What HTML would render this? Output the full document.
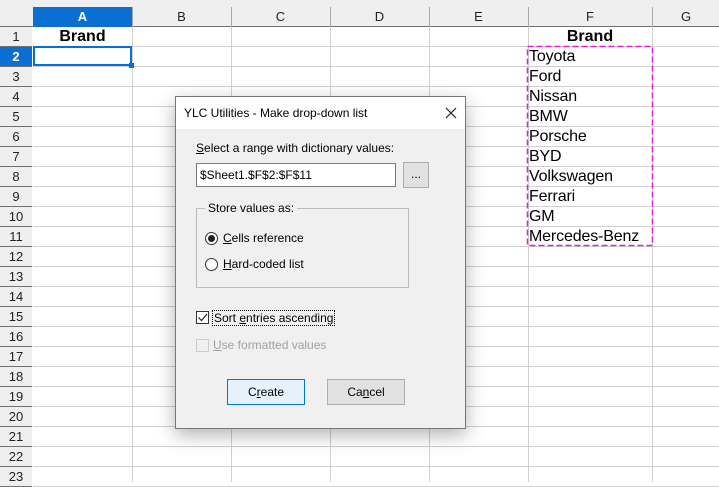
<!DOCTYPE html>
<html><head><meta charset="utf-8"><style>
*{margin:0;padding:0;box-sizing:border-box}
body{width:719px;height:482px;overflow:hidden;background:#fff;font-family:"Liberation Sans",sans-serif;position:relative}
.a{position:absolute}
.vl{position:absolute;top:0;width:1px;height:482px;background:#d0d0d0}
.hl{position:absolute;left:0;width:719px;height:1px;background:#d0d0d0}
.rh{position:absolute;left:0;width:32px;height:20px;background:#efefef;border-bottom:1px solid #707070;font-size:13px;text-align:center;line-height:20px;color:#222}
.ch{position:absolute;top:7px;height:20px;font-size:13px;text-align:center;line-height:20px;color:#222}
.cell{position:absolute;font-size:16px;line-height:20px;color:#000}
.d{font-family:"Liberation Sans",sans-serif;font-size:12px;color:#000}
u{text-decoration:underline}
</style></head><body>
<div class="a" style="left:0;top:0;width:719px;height:27px;background:#efefef;border-bottom:1px solid #707070"></div>
<div class="a" style="left:33px;top:7px;width:99px;height:20px;background:#0a6fd3"></div>
<div class="a" style="left:0;top:27px;width:32px;height:455px;background:#efefef;border-right:1px solid #707070"></div>
<div id="g"></div>
<script>
var g=document.getElementById('g'),h='';
var xs=[132,231,330,429,528,652];
xs.forEach(function(x){h+='<div class="vl" style="left:'+x+'px;top:27px;height:455px"></div><div class="vl" style="left:'+x+'px;top:7px;height:20px;background:#aaa"></div>';});
for(var n=1;n<=23;n++){var t=27+(n-1)*20;
h+='<div class="hl" style="left:33px;width:686px;top:'+(t+19)+'px"></div>';
h+='<div class="rh" style="top:'+t+'px;'+(n==2?'background:#0a6fd3;color:#fff;font-weight:bold':'')+'">'+n+'</div>';}
var cols=[['A',33,99],['B',132,99],['C',231,99],['D',330,99],['E',429,99],['F',528,124],['G',653,66]];
cols.forEach(function(c){h+='<div class="ch" style="left:'+c[1]+'px;width:'+c[2]+'px;'+(c[0]=='A'?'color:#fff;font-weight:bold':'')+'">'+c[0]+'</div>';});
var b=['Toyota','Ford','Nissan','BMW','Porsche','BYD','Volkswagen','Ferrari','GM','Mercedes-Benz'];
b.forEach(function(s,i){h+='<div class="cell" style="left:529px;top:'+(47+i*20)+'px;letter-spacing:-0.15px">'+s+'</div>';});
g.innerHTML=h;
</script>
<div class="cell" style="left:33px;top:27px;width:99px;text-align:center;font-weight:bold">Brand</div>
<div class="cell" style="left:528px;top:27px;width:124px;text-align:center;font-weight:bold">Brand</div>
<div class="a" style="left:33px;top:46px;width:99px;height:20px;border:2px solid #0a6fd3"></div>
<div class="a" style="left:129px;top:63px;width:5px;height:5px;background:#0a6fd3"></div>
<svg class="a" style="left:526px;top:45px" width="128" height="202"><rect x="1.5" y="1.5" width="125" height="199" fill="none" stroke="#e020d0" stroke-width="1.5" stroke-dasharray="6 3"/></svg>

<div class="a" style="left:175px;top:96px;width:291px;height:333px;background:#f0f0f0;border:1px solid #777;box-shadow:0 6px 18px rgba(0,0,0,.3)">
 <div class="a d" style="left:0;top:0;width:289px;height:32px;background:#fff"></div>
 <div class="a d" style="left:8px;top:9px">YLC Utilities - Make drop-down list</div>
 <svg class="a" style="left:269px;top:10px" width="12" height="12"><path d="M1 1L11 11M11 1L1 11" stroke="#222" stroke-width="1.2"/></svg>
 <div class="a d" style="left:20px;top:44px"><u>S</u>elect a range with dictionary values:</div>
 <div class="a d" style="left:20px;top:66px;width:200px;height:24px;background:#fff;border:1px solid #7a7a7a;padding:4px 3px">$Sheet1.$F$2:$F$11</div>
 <div class="a d" style="left:227px;top:65px;width:26px;height:26px;background:#e1e1e1;border:1px solid #adadad;text-align:center;line-height:22px">...</div>
 <div class="a" style="left:20px;top:111px;width:213px;height:80px;border:1px solid #bbb"></div>
 <div class="a d" style="left:29px;top:104px;background:#f0f0f0;padding:0 3px">Store values as:</div>
 <div class="a" style="left:29px;top:135px;width:13px;height:13px;border:1px solid #333;border-radius:50%;background:#fff"></div>
 <div class="a" style="left:32px;top:138px;width:7px;height:7px;border-radius:50%;background:#222"></div>
 <div class="a d" style="left:47px;top:134px"><u>C</u>ells reference</div>
 <div class="a" style="left:29px;top:161px;width:13px;height:13px;border:1px solid #333;border-radius:50%;background:#fff"></div>
 <div class="a d" style="left:47px;top:160px"><u>H</u>ard-coded list</div>
 <div class="a" style="left:20px;top:214px;width:13px;height:13px;border:1px solid #333;background:#fff"></div>
 <svg class="a" style="left:21px;top:215px" width="11" height="11"><path d="M1.5 5.5L4.5 8.5L10 2" stroke="#222" stroke-width="1.2" fill="none"/></svg>
 <div class="a d" style="left:36px;top:213px;padding:0 1px;border:1px dotted #000">Sort <u>e</u>ntries ascending</div>
 <div class="a" style="left:20px;top:242px;width:13px;height:13px;border:1px solid #ccc;background:#f0f0f0"></div>
 <div class="a d" style="left:37px;top:241px;color:#a0a0a0"><u>U</u>se formatted values</div>
 <div class="a d" style="left:51px;top:282px;width:78px;height:26px;background:#e5f1fb;border:1px solid #0078d7;text-align:center;line-height:24px">C<u>r</u>eate</div>
 <div class="a d" style="left:151px;top:282px;width:78px;height:26px;background:#e1e1e1;border:1px solid #adadad;text-align:center;line-height:24px">Ca<u>n</u>cel</div>
</div>
</body></html>
